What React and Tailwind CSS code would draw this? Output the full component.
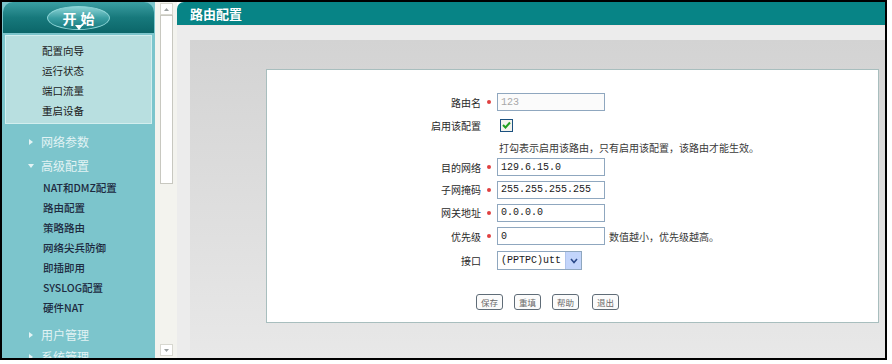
import React from 'react';

const cjk = { fontFamily: '"Noto Sans CJK SC", "Liberation Sans", sans-serif' };

// 左侧菜单
const quickLinks = ['配置向导', '运行状态', '端口流量', '重启设备'];
const advItems = ['NAT和DMZ配置', '路由配置', '策略路由', '网络尖兵防御', '即插即用', 'SYSLOG配置', '硬件NAT'];

function Arrow({ open }) {
  return (
    <svg width="6" height="6" viewBox="0 0 6 6" className="mr-[7px]">
      {open ? <path d="M0 1 L6 1 L3 5 Z" fill="#e4f4f5" /> : <path d="M1 0 L5 3 L1 6 Z" fill="#e4f4f5" />}
    </svg>
  );
}

function GroupHead({ label, open, className = '' }) {
  return (
    <div className={`h-[24px] shrink-0 flex items-center pl-[26px] text-[12px] text-[#e2f3f4] ${className}`}>
      <Arrow open={open} />
      <span>{label}</span>
    </div>
  );
}

function Sidebar() {
  return (
    <aside className="w-[153px] h-full shrink-0 bg-[#7cc5cc] flex flex-col overflow-hidden">
      <div className="h-[31px] shrink-0 mx-[1px] rounded-t-[10px] bg-gradient-to-b from-[#3a9fa3] via-[#17797c] to-[#0b6669] flex items-center justify-center">
        <div className="relative w-[63px] h-[24px] rounded-[50%] border border-[#8fd6d8] bg-gradient-to-b from-[#8ad4d6] via-[#3a9fa3] to-[#167a7e] flex items-center justify-center">
          <span className="text-white font-bold text-[14px] leading-none tracking-[4px] pl-[4px]">开始</span>
          <svg width="8" height="5" viewBox="0 0 8 5" className="absolute left-[27px] bottom-[-1px]">
            <path d="M0 0 L8 0 L4 5 Z" fill="#ffffff" />
          </svg>
        </div>
      </div>
      <div className="mx-[3px] mt-[2px] h-[89px] shrink-0 bg-[#b8dfe0] border border-[#d3eeee] pt-[5px] pl-[36px] flex flex-col">
        {quickLinks.map(t => (
          <div key={t} className="h-[20px] shrink-0 flex items-center text-[10.5px] text-[#1b1b1b]">{t}</div>
        ))}
      </div>
      <div className="pt-[6px] shrink-0 flex flex-col">
        <GroupHead label="网络参数" />
        <GroupHead label="高级配置" open />
        {advItems.map(t => (
          <div key={t} className="h-[20px] shrink-0 flex items-center pl-[41px] text-[10.5px] font-medium text-[#1d2a40]">{t}</div>
        ))}
        <GroupHead label="用户管理" className="mt-[5px]" />
        <GroupHead label="系统管理" className="mt-[-2px]" />
      </div>
    </aside>
  );
}

function ScrollTrack() {
  return (
    <div className="w-[22px] h-full shrink-0 bg-[#f3f3ee] flex flex-col items-center pt-[1px] pb-[2px]">
      <div className="w-[13px] h-[12px] shrink-0 border border-[#d8d8d0] bg-white flex items-center justify-center">
        <svg width="5" height="3" viewBox="0 0 5 3"><path d="M0 3 L2.5 0 L5 3 Z" fill="#9aa0a0" /></svg>
      </div>
      <div className="w-[13px] h-[169px] shrink-0 border border-[#c8c8c0] bg-white" />
      <div className="flex-1" />
      <div className="w-[13px] h-[12px] shrink-0 border border-[#d8d8d0] bg-white flex items-center justify-center">
        <svg width="5" height="3" viewBox="0 0 5 3"><path d="M0 0 L5 0 L2.5 3 Z" fill="#9aa0a0" /></svg>
      </div>
    </div>
  );
}

function Field({ label, star = true, children, h }) {
  return (
    <div className={`flex items-center shrink-0 ${h}`}>
      <div className="w-[214px] text-right text-[10px] text-[#2a2a2a]">{label}</div>
      <div className="w-[16px] flex justify-center">
        {star && <span className="w-[4px] h-[4px] rounded-full bg-[#e04040]" />}
      </div>
      {children}
    </div>
  );
}

function TextBox({ value, muted }) {
  return (
    <div
      className={`w-[108px] h-[18px] border border-[#8fa7bf] flex items-center pl-[3px] text-[10px] ${muted ? 'text-[#a8a8a8] bg-[#fbfbfb]' : 'text-[#1a1a1a] bg-white'}`}
      style={{ fontFamily: '"Liberation Mono", monospace' }}
    >
      {value}
    </div>
  );
}

function Btn({ label }) {
  return (
    <div className="w-[27px] h-[16px] rounded-[3px] border border-[#5f6c77] bg-[#fbfbfb] flex items-center justify-center text-[8.5px] text-[#6a6a6a]">
      {label}
    </div>
  );
}

function RouteForm() {
  return (
    <div className="h-[254px] bg-white border border-[#a8bebe] pt-[22px] flex flex-col">
      <Field label="路由名" h="h-[20px]"><TextBox value="123" muted /></Field>
      <Field label="启用该配置" star={false} h="h-[26px]">
        <div className="ml-[3px] w-[13px] h-[13px] border border-[#1c5180] bg-[#f4f4ee] flex items-center justify-center">
          <svg width="9" height="8" viewBox="0 0 9 8">
            <path d="M1 4 L3.5 6.5 L8 1.5" stroke="#21a121" strokeWidth="2" fill="none" />
          </svg>
        </div>
      </Field>
      <div className="h-[18px] shrink-0 flex items-center pl-[232px] text-[10px] text-[#3a3a3a]">
        打勾表示启用该路由，只有启用该配置，该路由才能生效。
      </div>
      <Field label="目的网络" h="h-[22px]"><TextBox value="129.6.15.0" /></Field>
      <Field label="子网掩码" h="h-[23px]"><TextBox value="255.255.255.255" /></Field>
      <Field label="网关地址" h="h-[23px]"><TextBox value="0.0.0.0" /></Field>
      <Field label="优先级" h="h-[24px]">
        <TextBox value="0" />
        <span className="ml-[4px] text-[10px] text-[#3a3a3a]">数值越小，优先级越高。</span>
      </Field>
      <Field label="接口" star={false} h="h-[25px]">
        <div className="w-[85px] h-[19px] border border-[#8fa7bf] bg-white flex items-center">
          <span className="flex-1 pl-[3px] text-[10px] text-[#1a1a1a]" style={{ fontFamily: '"Liberation Mono", monospace' }}>(PPTPC)utt</span>
          <div className="w-[16px] h-full bg-[#c3d5fb] border-l border-[#b0c4ec] flex items-center justify-center">
            <svg width="8" height="6" viewBox="0 0 8 6"><path d="M1 1 L4 4.5 L7 1" stroke="#2c4a8a" strokeWidth="1.6" fill="none" /></svg>
          </div>
        </div>
      </Field>
      <div className="mt-[21px] pl-[209px] flex gap-[11px]">
        <Btn label="保存" />
        <Btn label="重填" />
        <Btn label="帮助" />
        <div className="ml-[2px]"><Btn label="退出" /></div>
      </div>
    </div>
  );
}

function Main() {
  return (
    <main className="flex-1 h-full flex flex-col min-w-0">
      <div className="h-[23px] shrink-0 rounded-tl-[7px] bg-[#078486] flex items-center pl-[13px]">
        <span className="text-white font-bold text-[13px]">路由配置</span>
      </div>
      <div className="flex-1 bg-[#ececec] border-t border-[#f4e4e4] pt-[14px] pl-[13px] flex">
        <div className="flex-1 bg-gradient-to-b from-[#d3d3d3] to-[#e8e8e8] pt-[29px] pl-[76px] pr-[6px]">
          <RouteForm />
        </div>
      </div>
    </main>
  );
}

export default function App() {
  return (
    <div className="w-[892px] h-[364px] bg-white" style={cjk}>
      <div className="w-[887px] h-[360px] border-2 border-black flex overflow-hidden">
        <Sidebar />
        <ScrollTrack />
        <Main />
      </div>
    </div>
  );
}
